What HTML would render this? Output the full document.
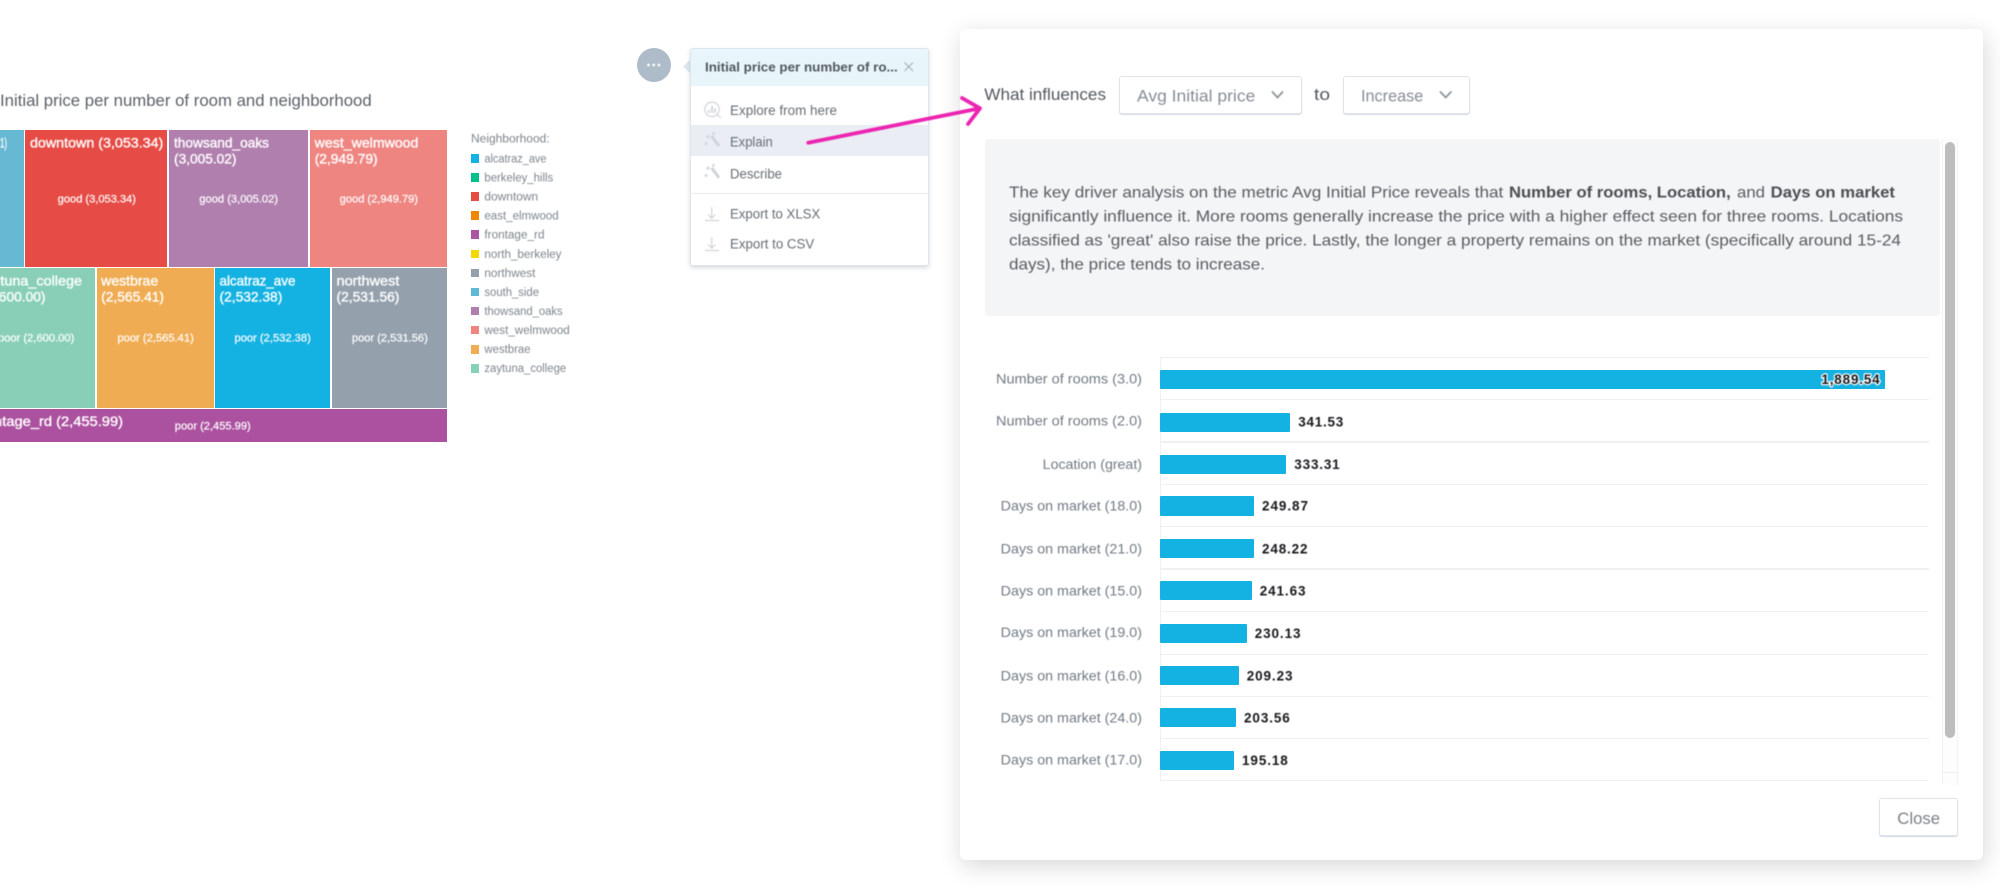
<!DOCTYPE html>
<html lang="en">
<head>
<meta charset="utf-8">
<title>Key driver analysis</title>
<style>
html,body{margin:0;padding:0;background:#fff;width:2000px;height:890px;overflow:hidden}
body{position:relative;font-family:"Liberation Sans",sans-serif}
.b{position:absolute;box-sizing:border-box}
svg{position:absolute;left:0;top:0}
text{font-family:"Liberation Sans",sans-serif}
</style>
</head>
<body>
<!-- treemap cells -->
<div class="b" style="left:0;top:130px;width:24px;height:137px;background:#66b8d3"></div>
<div class="b" style="left:25px;top:130px;width:142px;height:137px;background:#e64b45"></div>
<div class="b" style="left:169px;top:130px;width:139px;height:137px;background:#b07fae"></div>
<div class="b" style="left:310px;top:130px;width:136.5px;height:137px;background:#ee8580"></div>
<div class="b" style="left:0;top:268px;width:95px;height:140px;background:#89cfb8"></div>
<div class="b" style="left:97px;top:268px;width:116.5px;height:140px;background:#f0ac53"></div>
<div class="b" style="left:215px;top:268px;width:115px;height:140px;background:#14b2e2"></div>
<div class="b" style="left:332px;top:268px;width:114.5px;height:140px;background:#94a1ad"></div>
<div class="b" style="left:0;top:409px;width:446.5px;height:33px;background:#ab519f"></div>
<!-- legend swatches -->
<div class="b" style="left:471px;top:154px;width:8px;height:8.5px;background:#14b2e2"></div>
<div class="b" style="left:471px;top:173px;width:8px;height:8.5px;background:#00c18c"></div>
<div class="b" style="left:471px;top:192px;width:8px;height:8.5px;background:#e54d42"></div>
<div class="b" style="left:471px;top:211px;width:8px;height:8.5px;background:#f18600"></div>
<div class="b" style="left:471px;top:230px;width:8px;height:8.5px;background:#ab55a3"></div>
<div class="b" style="left:471px;top:249.5px;width:8px;height:8.5px;background:#f5d800"></div>
<div class="b" style="left:471px;top:268.5px;width:8px;height:8.5px;background:#94a1ad"></div>
<div class="b" style="left:471px;top:287.5px;width:8px;height:8.5px;background:#5fb9d6"></div>
<div class="b" style="left:471px;top:306.5px;width:8px;height:8.5px;background:#b07fae"></div>
<div class="b" style="left:471px;top:325.5px;width:8px;height:8.5px;background:#ee8580"></div>
<div class="b" style="left:471px;top:345px;width:8px;height:8.5px;background:#f2ad52"></div>
<div class="b" style="left:471px;top:364px;width:8px;height:8.5px;background:#86d1b7"></div>
<!-- dots button -->
<div class="b" style="left:637px;top:48px;width:34px;height:34px;border-radius:50%;background:#aebbc8"></div>
<!-- popup -->
<div class="b" style="left:685px;top:62px;width:9px;height:9px;background:#dce9f0;transform:rotate(45deg)"></div>
<div class="b" style="left:690px;top:48px;width:238.5px;height:218px;background:#fff;border:1px solid #e0e5ea;border-radius:3px;box-shadow:0 2px 4px rgba(90,110,140,.25);overflow:hidden">
  <div class="b" style="left:0;top:0;width:100%;height:37px;background:#e8f6fc"></div>
  <div class="b" style="left:0;top:76px;width:100%;height:31px;background:#eaeef4"></div>
  <div class="b" style="left:0;top:144px;width:100%;height:1px;background:#e9ebed"></div>
</div>
<!-- modal -->
<div class="b" style="left:960px;top:29px;width:1023px;height:831px;background:#fff;border-radius:6px;box-shadow:2px 6px 24px rgba(0,0,0,.16)"></div>
<div class="b" style="left:1119px;top:76px;width:183px;height:37.5px;background:#fff;border:1px solid #e0e4e9;border-radius:3px;box-shadow:0 1px 1px rgba(100,120,150,.25)"></div>
<div class="b" style="left:1343px;top:76px;width:127px;height:37.5px;background:#fff;border:1px solid #e0e4e9;border-radius:3px;box-shadow:0 1px 1px rgba(100,120,150,.25)"></div>
<div class="b" style="left:984.5px;top:138.5px;width:955.5px;height:177.5px;background:#f4f5f6;border-radius:3px"></div>
<!-- scrollbar -->
<div class="b" style="left:1941.5px;top:138.5px;width:16.5px;height:646.5px;background:#fdfdfd;border-left:1px solid #f3f3f3;border-right:1px solid #f3f3f3"></div>
<div class="b" style="left:1941.5px;top:772px;width:16.5px;height:1px;background:#efefef"></div>
<div class="b" style="left:1945.3px;top:142.3px;width:9.5px;height:596px;background:#bdbdbd;border-radius:5px"></div>
<!-- chart grid -->
<div class="b" style="left:1159.5px;top:357px;width:1px;height:424px;background:#f0f0f0"></div>
<div class="b" style="left:1160px;top:356.5px;width:768.5px;height:1.4px;background:#f0f0f0"></div>
<div class="b" style="left:1160px;top:399px;width:768.5px;height:1.4px;background:#f0f0f0"></div>
<div class="b" style="left:1160px;top:441.3px;width:768.5px;height:1.4px;background:#f0f0f0"></div>
<div class="b" style="left:1160px;top:483.7px;width:768.5px;height:1.4px;background:#f0f0f0"></div>
<div class="b" style="left:1160px;top:526px;width:768.5px;height:1.4px;background:#f0f0f0"></div>
<div class="b" style="left:1160px;top:568.3px;width:768.5px;height:1.4px;background:#f0f0f0"></div>
<div class="b" style="left:1160px;top:610.7px;width:768.5px;height:1.4px;background:#f0f0f0"></div>
<div class="b" style="left:1160px;top:653.5px;width:768.5px;height:1.4px;background:#f0f0f0"></div>
<div class="b" style="left:1160px;top:695.5px;width:768.5px;height:1.4px;background:#f0f0f0"></div>
<div class="b" style="left:1160px;top:738px;width:768.5px;height:1.4px;background:#f0f0f0"></div>
<div class="b" style="left:1160px;top:780px;width:768.5px;height:1.4px;background:#f0f0f0"></div>
<!-- bars -->
<div class="b" style="left:1160px;top:369.5px;width:724.5px;height:19.4px;background:#14b2e2;border-radius:1px"></div>
<div class="b" style="left:1160px;top:412.5px;width:130px;height:19.4px;background:#14b2e2;border-radius:1px"></div>
<div class="b" style="left:1160px;top:454.5px;width:126.3px;height:19.4px;background:#14b2e2;border-radius:1px"></div>
<div class="b" style="left:1160px;top:496.2px;width:94.3px;height:19.4px;background:#14b2e2;border-radius:1px"></div>
<div class="b" style="left:1160px;top:539px;width:94.3px;height:19.4px;background:#14b2e2;border-radius:1px"></div>
<div class="b" style="left:1160px;top:581px;width:92px;height:19.4px;background:#14b2e2;border-radius:1px"></div>
<div class="b" style="left:1160px;top:624px;width:87px;height:19.4px;background:#14b2e2;border-radius:1px"></div>
<div class="b" style="left:1160px;top:665.7px;width:78.7px;height:19.4px;background:#14b2e2;border-radius:1px"></div>
<div class="b" style="left:1160px;top:707.5px;width:76px;height:19.4px;background:#14b2e2;border-radius:1px"></div>
<div class="b" style="left:1160px;top:750.5px;width:74px;height:19.4px;background:#14b2e2;border-radius:1px"></div>
<!-- close -->
<div class="b" style="left:1879px;top:797.5px;width:79.3px;height:38.5px;background:#fff;border:1px solid #e0e4e9;border-radius:3px;box-shadow:0 1px 1px rgba(100,130,170,.3)"></div>

<svg width="2000" height="890" viewBox="0 0 2000 890" xmlns="http://www.w3.org/2000/svg" style="filter:blur(.4px)">
<!-- title -->
<text x="0" y="106" font-size="16.5" fill="#5b6168" textLength="371.7" lengthAdjust="spacingAndGlyphs">Initial price per number of room and neighborhood</text>
<!-- treemap labels -->
<g fill="#fff" stroke="#fff" stroke-width=".35" font-size="14">
<text x="0" y="147.3" textLength="7" lengthAdjust="spacingAndGlyphs">1)</text>
<text x="30" y="147.3" textLength="133.3" lengthAdjust="spacingAndGlyphs">downtown (3,053.34)</text>
<text x="174" y="147.3" textLength="95" lengthAdjust="spacingAndGlyphs">thowsand_oaks</text>
<text x="174" y="163.3" textLength="62.5" lengthAdjust="spacingAndGlyphs">(3,005.02)</text>
<text x="314.7" y="147.3" textLength="103.7" lengthAdjust="spacingAndGlyphs">west_welmwood</text>
<text x="314.7" y="163.3" textLength="62.9" lengthAdjust="spacingAndGlyphs">(2,949.79)</text>
<text x="-22" y="285.7" textLength="104" lengthAdjust="spacingAndGlyphs">zaytuna_college</text>
<text x="-17.3" y="301.7" textLength="62.8" lengthAdjust="spacingAndGlyphs">(2,600.00)</text>
<text x="101.2" y="285.7" textLength="57" lengthAdjust="spacingAndGlyphs">westbrae</text>
<text x="101.2" y="301.7" textLength="62.8" lengthAdjust="spacingAndGlyphs">(2,565.41)</text>
<text x="219.5" y="285.7" textLength="75.9" lengthAdjust="spacingAndGlyphs">alcatraz_ave</text>
<text x="219.5" y="301.7" textLength="62.8" lengthAdjust="spacingAndGlyphs">(2,532.38)</text>
<text x="336.5" y="285.7" textLength="62.9" lengthAdjust="spacingAndGlyphs">northwest</text>
<text x="336.5" y="301.7" textLength="62.9" lengthAdjust="spacingAndGlyphs">(2,531.56)</text>
<text x="-23" y="426" textLength="146" lengthAdjust="spacingAndGlyphs">frontage_rd (2,455.99)</text>
</g>
<g fill="#fff" stroke="#fff" stroke-width=".2" font-size="11">
<text x="57.7" y="202.7" textLength="78.3" lengthAdjust="spacingAndGlyphs">good (3,053.34)</text>
<text x="199.3" y="202.7" textLength="78.7" lengthAdjust="spacingAndGlyphs">good (3,005.02)</text>
<text x="339.7" y="202.7" textLength="78.3" lengthAdjust="spacingAndGlyphs">good (2,949.79)</text>
<text x="-2" y="341.7" textLength="76.3" lengthAdjust="spacingAndGlyphs">poor (2,600.00)</text>
<text x="117.4" y="341.7" textLength="76.4" lengthAdjust="spacingAndGlyphs">poor (2,565.41)</text>
<text x="234.5" y="341.7" textLength="76.3" lengthAdjust="spacingAndGlyphs">poor (2,532.38)</text>
<text x="351.9" y="341.7" textLength="75.9" lengthAdjust="spacingAndGlyphs">poor (2,531.56)</text>
<text x="174.8" y="429.3" textLength="75.9" lengthAdjust="spacingAndGlyphs">poor (2,455.99)</text>
</g>
<!-- legend -->
<g fill="#7d858d" font-size="11.5">
<text x="471" y="142.7" textLength="78.6" lengthAdjust="spacingAndGlyphs">Neighborhood:</text>
<text x="484.4" y="162.5" textLength="62.1" lengthAdjust="spacingAndGlyphs">alcatraz_ave</text>
<text x="484.4" y="181.5" textLength="68.8" lengthAdjust="spacingAndGlyphs">berkeley_hills</text>
<text x="484.4" y="200.6" textLength="53.8" lengthAdjust="spacingAndGlyphs">downtown</text>
<text x="484.4" y="219.7" textLength="74.3" lengthAdjust="spacingAndGlyphs">east_elmwood</text>
<text x="484.4" y="238.7" textLength="60.1" lengthAdjust="spacingAndGlyphs">frontage_rd</text>
<text x="484.4" y="257.8" textLength="77.1" lengthAdjust="spacingAndGlyphs">north_berkeley</text>
<text x="484.4" y="276.9" textLength="51" lengthAdjust="spacingAndGlyphs">northwest</text>
<text x="484.4" y="295.9" textLength="54.6" lengthAdjust="spacingAndGlyphs">south_side</text>
<text x="484.4" y="315" textLength="78.3" lengthAdjust="spacingAndGlyphs">thowsand_oaks</text>
<text x="484.4" y="334" textLength="85.4" lengthAdjust="spacingAndGlyphs">west_welmwood</text>
<text x="484.4" y="353.1" textLength="46.2" lengthAdjust="spacingAndGlyphs">westbrae</text>
<text x="484.4" y="372.2" textLength="81.8" lengthAdjust="spacingAndGlyphs">zaytuna_college</text>
</g>
<!-- dots -->
<circle cx="648.5" cy="65" r="1.4" fill="#fff"/><circle cx="653.7" cy="65" r="1.4" fill="#fff"/><circle cx="658.9" cy="65" r="1.4" fill="#fff"/>
<!-- popup text -->
<text x="705" y="71.7" font-size="13" font-weight="700" fill="#50565d" textLength="192.7" lengthAdjust="spacingAndGlyphs">Initial price per number of ro...</text>
<path d="M904.5 62.5l8.5 8.5M913 62.5l-8.5 8.5" stroke="#a3aab1" stroke-width="1" fill="none"/>
<g fill="#666d74" font-size="13.5">
<text x="730" y="115" textLength="107" lengthAdjust="spacingAndGlyphs">Explore from here</text>
<text x="730" y="146.7" textLength="42.7" lengthAdjust="spacingAndGlyphs">Explain</text>
<text x="730" y="178.3" textLength="52" lengthAdjust="spacingAndGlyphs">Describe</text>
<text x="730" y="218.3" textLength="90.3" lengthAdjust="spacingAndGlyphs">Export to XLSX</text>
<text x="730" y="248.3" textLength="84.3" lengthAdjust="spacingAndGlyphs">Export to CSV</text>
</g>
<!-- menu icons -->
<g fill="none" stroke="#d0d4d9" stroke-width="1.2">
<circle cx="712" cy="109.3" r="7.2"/>
<path d="M717.3 114.5l3.5 3.5"/>
<path d="M709 113v-3M712 113v-7M715 113v-4.5" stroke-width="1.8"/>
<path d="M711.5 136l7.5 10" stroke-width="3"/>
<path d="M708 134.500v4M706 136.500h4M713.500 132v3M712 133.500h3M706 142v3.500M704.300 143.800h3.500"/>
<path d="M711.500 167.700l7.500 10" stroke-width="3"/>
<path d="M708 166.200v4M706 168.200h4M713.500 163.700v3M712 165.200h3M706 173.700v3.500M704.300 175.500h3.500"/>
<path d="M711.700 207v11M708 214.500l3.700 3.700 3.700-3.700M705 220.500h14"/>
<path d="M711.700 237v11M708 244.500l3.700 3.700 3.700-3.700M705 250.500h14"/>
</g>
<!-- modal header -->
<text x="984.300" y="100" font-size="17" fill="#53585e" textLength="121.700" lengthAdjust="spacingAndGlyphs">What influences</text>
<text x="1137" y="101.700" font-size="17" fill="#868d96" textLength="118.300" lengthAdjust="spacingAndGlyphs">Avg Initial price</text>
<text x="1314" y="100" font-size="17" fill="#53585e" textLength="16" lengthAdjust="spacingAndGlyphs">to</text>
<text x="1361" y="101.700" font-size="17" fill="#868d96" textLength="62.300" lengthAdjust="spacingAndGlyphs">Increase</text>
<path d="M1272 91.500l5.500 6 5.500-6M1440 91.500l5.700 6 5.700-6" fill="none" stroke="#8d949b" stroke-width="1.800"/>
<!-- paragraph -->
<g font-size="16" fill="#585c61">
<text x="1009" y="197.700" textLength="494.300" lengthAdjust="spacingAndGlyphs">The key driver analysis on the metric Avg Initial Price reveals that</text>
<text x="1509" y="197.700" font-weight="700" fill="#4a4e53" textLength="221.700" lengthAdjust="spacingAndGlyphs">Number of rooms, Location,</text>
<text x="1737" y="197.700" textLength="28" lengthAdjust="spacingAndGlyphs">and</text>
<text x="1770.700" y="197.700" font-weight="700" fill="#4a4e53" textLength="124.300" lengthAdjust="spacingAndGlyphs">Days on market</text>
<text x="1009" y="221.700" textLength="894" lengthAdjust="spacingAndGlyphs">significantly influence it. More rooms generally increase the price with a higher effect seen for three rooms. Locations</text>
<text x="1009" y="245.300" textLength="892" lengthAdjust="spacingAndGlyphs">classified as 'great' also raise the price. Lastly, the longer a property remains on the market (specifically around 15-24</text>
<text x="1009" y="269.300" textLength="256" lengthAdjust="spacingAndGlyphs">days), the price tends to increase.</text>
</g>
<!-- chart labels -->
<g font-size="13.5" fill="#717a84">
<text x="996" y="383.300" textLength="146" lengthAdjust="spacingAndGlyphs">Number of rooms (3.0)</text>
<text x="996" y="425.700" textLength="146" lengthAdjust="spacingAndGlyphs">Number of rooms (2.0)</text>
<text x="1042.700" y="469" textLength="99.300" lengthAdjust="spacingAndGlyphs">Location (great)</text>
<text x="1000.700" y="510.300" textLength="141.300" lengthAdjust="spacingAndGlyphs">Days on market (18.0)</text>
<text x="1000.700" y="553.700" textLength="141.300" lengthAdjust="spacingAndGlyphs">Days on market (21.0)</text>
<text x="1000.700" y="595.700" textLength="141.300" lengthAdjust="spacingAndGlyphs">Days on market (15.0)</text>
<text x="1000.700" y="637" textLength="141.300" lengthAdjust="spacingAndGlyphs">Days on market (19.0)</text>
<text x="1000.700" y="680.300" textLength="141.300" lengthAdjust="spacingAndGlyphs">Days on market (16.0)</text>
<text x="1000.700" y="722.300" textLength="141.300" lengthAdjust="spacingAndGlyphs">Days on market (24.0)</text>
<text x="1000.700" y="764.700" textLength="141.300" lengthAdjust="spacingAndGlyphs">Days on market (17.0)</text>
</g>
<!-- chart values -->
<g font-size="13.5" font-weight="700" fill="#15171a">
<text x="1298.300" y="426.700" textLength="45" lengthAdjust="spacing">341.53</text>
<text x="1294.300" y="469" textLength="45.400" lengthAdjust="spacing">333.31</text>
<text x="1262" y="510.300" textLength="46" lengthAdjust="spacing">249.87</text>
<text x="1262" y="553.700" textLength="45.500" lengthAdjust="spacing">248.22</text>
<text x="1259.700" y="595.700" textLength="45.800" lengthAdjust="spacing">241.63</text>
<text x="1254.700" y="638" textLength="45.800" lengthAdjust="spacing">230.13</text>
<text x="1246.700" y="680.700" textLength="45.800" lengthAdjust="spacing">209.23</text>
<text x="1244" y="722.700" textLength="45.800" lengthAdjust="spacing">203.56</text>
<text x="1242" y="765" textLength="45.800" lengthAdjust="spacing">195.18</text>
<text x="1821.400" y="384" textLength="58.300" lengthAdjust="spacing" stroke="#fff" stroke-width="2.400" paint-order="stroke" stroke-linejoin="round">1,889.54</text>
</g>
<text x="1897.300" y="824" font-size="17" fill="#7a8087" textLength="42.700" lengthAdjust="spacingAndGlyphs">Close</text>
<!-- pink arrow -->
<path d="M808.300 142.700L979 108.500M962 98l18 10.300-12 15.700" fill="none" stroke="#ec25b1" stroke-width="3.800" stroke-linecap="round" stroke-linejoin="round"/>
</svg>
</body>
</html>
